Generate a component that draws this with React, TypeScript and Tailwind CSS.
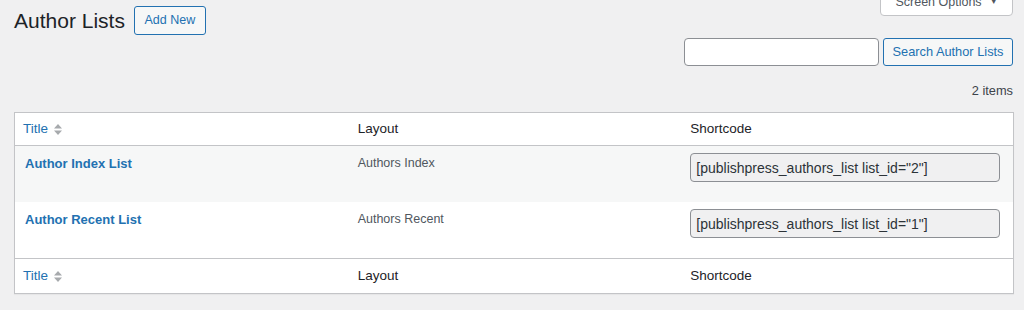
import React from 'react'

const rows = [
  { title: 'Author Index List', layout: 'Authors Index', code: '[publishpress_authors_list list_id="2"]', striped: true },
  { title: 'Author Recent List', layout: 'Authors Recent', code: '[publishpress_authors_list list_id="1"]', striped: false },
]

function SortIcon() {
  return (
    <svg width="8" height="13" viewBox="0 0 8 13" className="ml-[6px]" fill="#a7aaad">
      <path d="M0 5.5 L4 1 L8 5.5 Z" />
      <path d="M0 7.5 L4 12 L8 7.5 Z" />
    </svg>
  )
}

function HeadRow({ bottom }: { bottom?: boolean }) {
  return (
    <div
      className={
        'grid grid-cols-3 items-center text-[13.5px] text-[#1d2327] ' +
        (bottom ? 'h-[35px] border-t border-[#c3c4c7]' : 'h-[33px] border-b border-[#c3c4c7]')
      }
    >
      <div className="pl-[8px] flex items-center text-[#2271b1]">
        <span>Title</span>
        <SortIcon />
      </div>
      <div className="pl-[10px]">Layout</div>
      <div className="pl-[10px]">Shortcode</div>
    </div>
  )
}

export default function App() {
  return (
    <div className="relative w-full h-[310px] overflow-hidden bg-[#f0f0f1] font-['Liberation_Sans',Arial,sans-serif]">
      {/* Screen Options tab */}
      <div className="absolute right-[11px] top-[-12px] w-[133px] h-[28px] flex items-center justify-center gap-[8px] bg-white border border-[#c3c4c7] rounded-b-[4px] text-[12.5px] text-[#50575e]">
        <span>Screen Options</span>
        <span className="text-[8px]">▼</span>
      </div>

      {/* Heading */}
      <div className="flex items-center pt-[6px] pl-[14px]">
        <h1 className="text-[21px] text-[#1d2327] leading-[29px]">Author Lists</h1>
        <button className="ml-[9px] h-[29px] w-[72px] border border-[#2271b1] rounded-[3px] bg-[#f6f7f7] text-[12.5px] text-[#2271b1]">
          Add New
        </button>
      </div>

      {/* Search */}
      <div className="flex justify-end gap-[4px] pr-[11px] mt-[3px]">
        <input className="w-[195px] h-[28px] bg-white border border-[#8c8f94] rounded-[4px]" />
        <button className="w-[130px] h-[28px] border border-[#2271b1] rounded-[3px] bg-[#f6f7f7] text-[12.8px] text-[#2271b1]">
          Search Author Lists
        </button>
      </div>

      <div className="mt-[16px] pr-[11px] text-right text-[12.8px] leading-[18px] text-[#3c434a]">2 items</div>

      {/* Table */}
      <div className="mt-[12px] ml-[14px] w-[1000px] bg-white border border-[#c3c4c7] shadow-[0_1px_1px_rgba(0,0,0,0.04)]">
        <HeadRow />
        {rows.map((r) => (
          <div key={r.title} className={'grid grid-cols-3 h-[56px] ' + (r.striped ? 'bg-[#f6f7f7]' : 'bg-white')}>
            <div className="pt-[10px] px-[10px] text-[13px] leading-[15px] font-bold text-[#2271b1]">{r.title}</div>
            <div className="pt-[10px] px-[10px] text-[12.5px] leading-[15px] text-[#50575e]">{r.layout}</div>
            <div className="pt-[7px] px-[10px]">
              <input
                readOnly
                value={r.code}
                className="w-[310px] h-[29px] pl-[5px] bg-[#f0f0f1] border border-[#8c8f94] rounded-[4px] text-[14px] text-[#2c3338] outline-none"
              />
            </div>
          </div>
        ))}
        <HeadRow bottom />
      </div>
    </div>
  )
}
